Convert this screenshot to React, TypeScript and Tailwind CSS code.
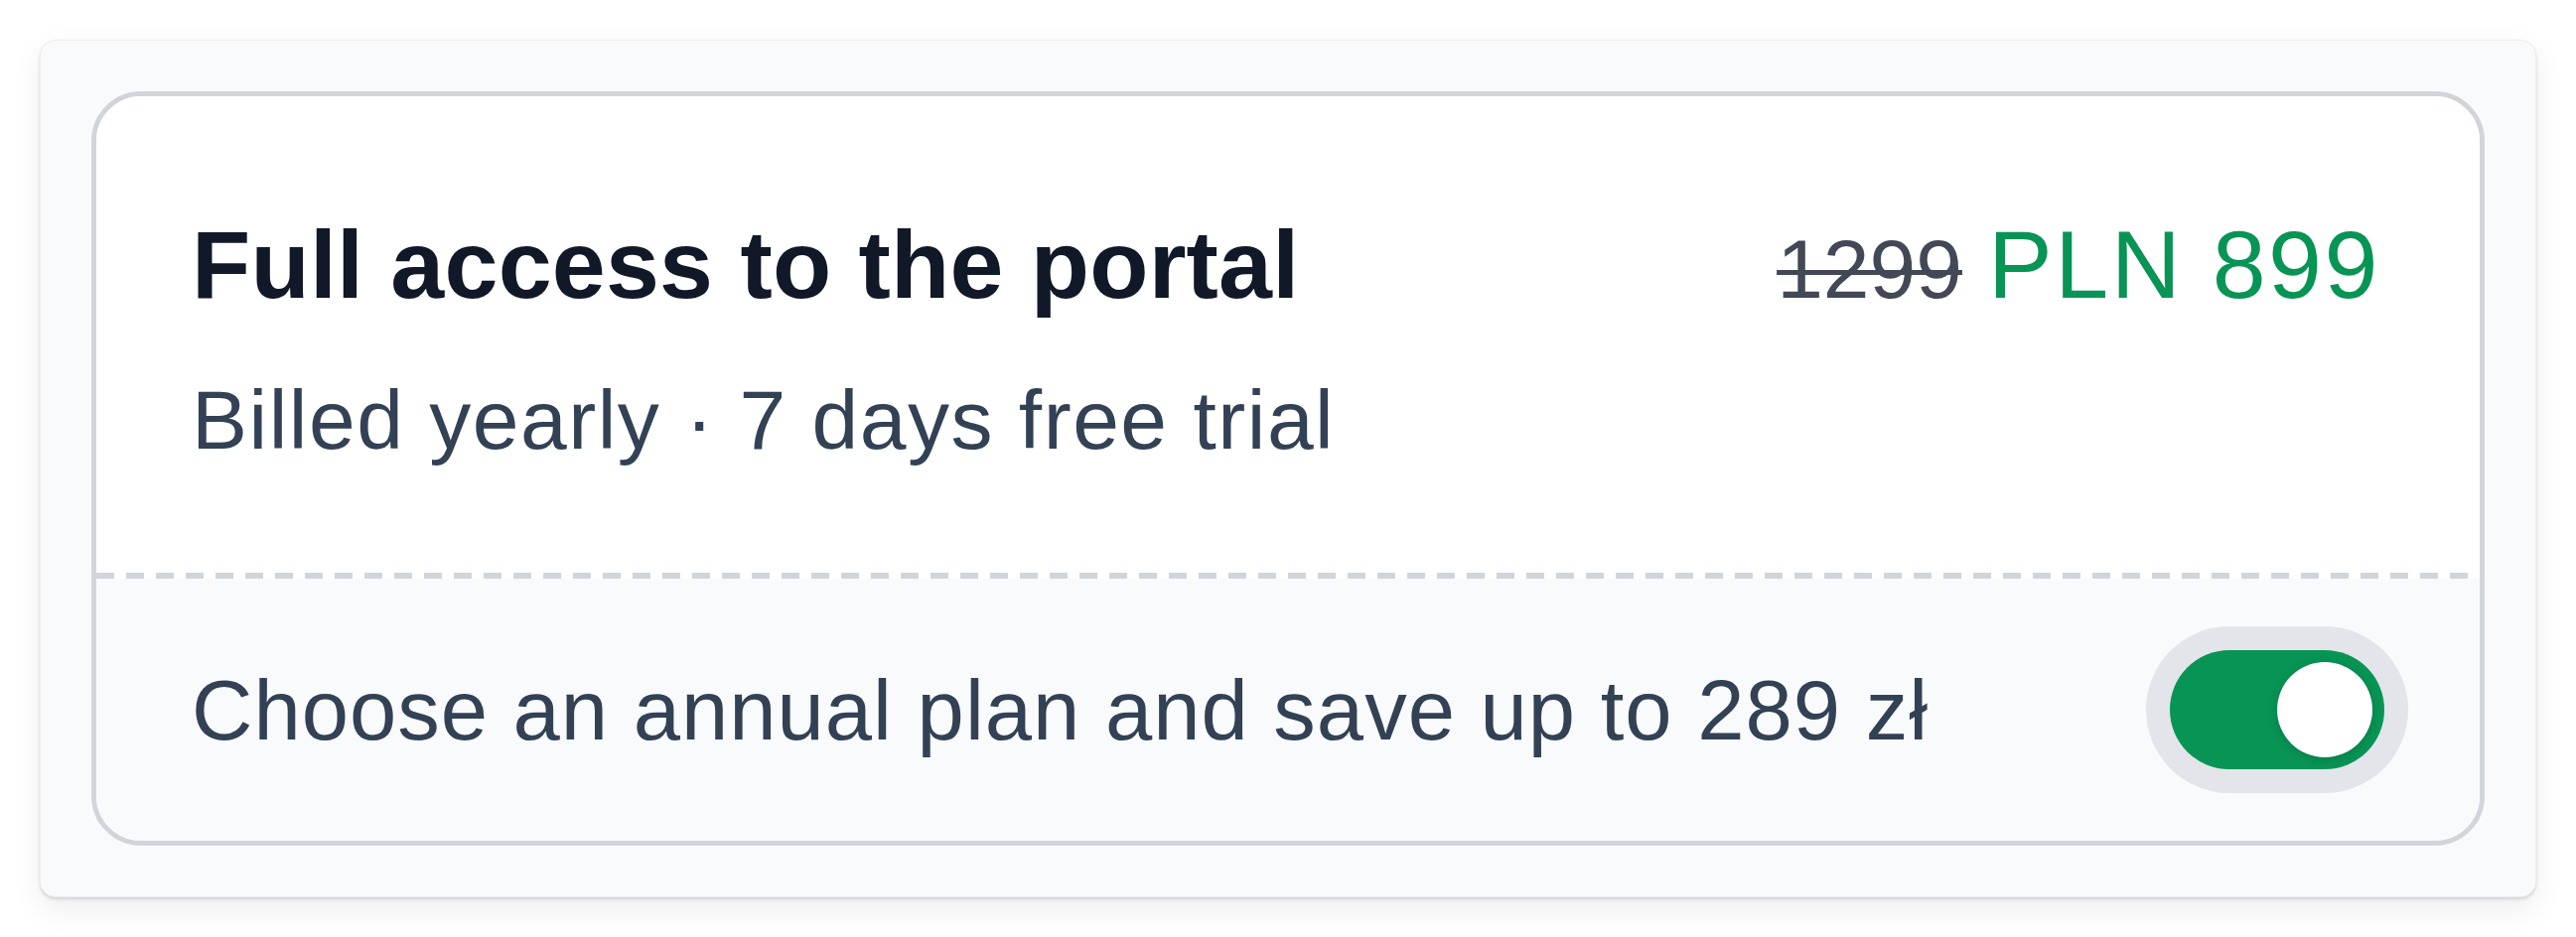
import React from "react";

export default function App() {
  const font = { fontFamily: '"Liberation Sans", Arial, sans-serif' };
  return (
    <div className="min-h-screen w-full bg-white p-[40px]" style={font}>
      <div className="h-[864px] w-[2514px] rounded-[16px] border border-[#eceef1] bg-[#f9fafb] p-[51px] shadow-[0_2px_3px_rgba(0,0,0,0.12),0_12px_30px_rgba(0,0,0,0.08)]">
        <div className="flex h-full flex-col overflow-hidden rounded-[50px] border-[5px] border-[#d1d5db] bg-white">
          <div className="flex h-[480px] flex-col bg-white pl-[96px] pr-[100px] pt-[121px]">
            <div className="flex items-baseline justify-between">
              <h1 className="text-[97px] font-bold leading-none tracking-[0.2px] text-[#111827]">
                Full access to the portal
              </h1>
              <div className="flex items-baseline gap-[26px] leading-none">
                <span className="text-[84px] text-[#434856] line-through decoration-[5px]">1299</span>
                <span className="text-[97px] tracking-[2.5px] text-[#089455]">PLN 899</span>
              </div>
            </div>
            <p className="mt-[66px] text-[84px] leading-none tracking-[1.5px] text-[#334155]">
              Billed yearly · 7 days free trial
            </p>
          </div>
          <div className="h-[6px] w-full bg-[repeating-linear-gradient(90deg,#d1d5db_0px,#d1d5db_18px,transparent_18px,transparent_30px)]" />
          <div className="flex flex-1 items-center justify-between bg-[#f9fafb] pl-[96px] pr-[72px]">
            <span className="text-[85px] leading-none tracking-[1px] text-[#334155]">
              Choose an annual plan and save up to 289 zł
            </span>
            <div className="rounded-full bg-[#e3e5ea] p-[24px]">
              <div className="flex h-[120px] w-[216px] items-center justify-end rounded-full bg-[#089455] p-[12px]">
                <div className="h-[96px] w-[96px] rounded-full bg-white shadow-[0_2px_10px_rgba(0,0,0,0.18)]" />
              </div>
            </div>
          </div>
        </div>
      </div>
    </div>
  );
}
